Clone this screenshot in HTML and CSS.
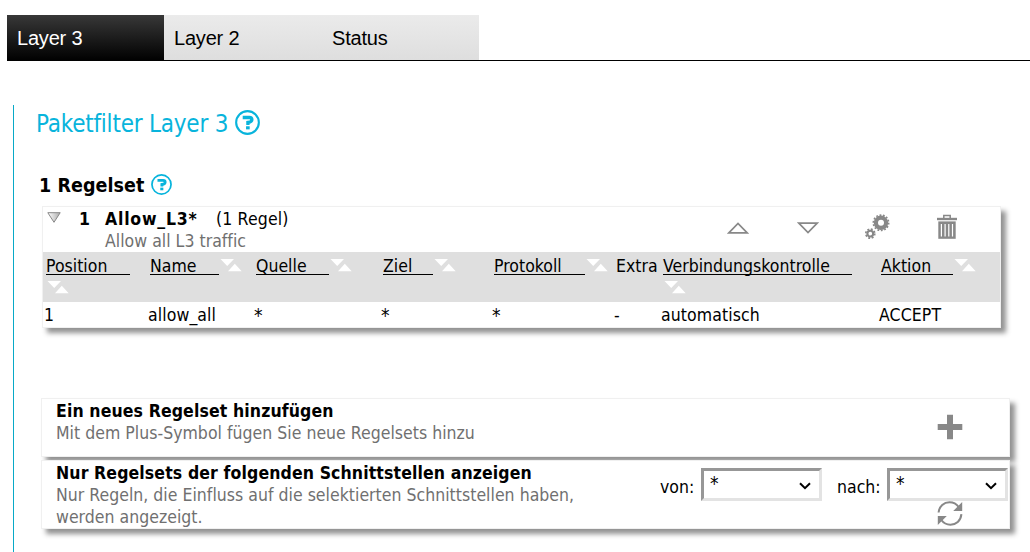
FILE: index.html
```
<!DOCTYPE html>
<html lang="de">
<head>
<meta charset="utf-8">
<title>Paketfilter Layer 3</title>
<link rel="stylesheet" href="styles.css">
</head>
<body>
<svg class="defs" width="0" height="0" aria-hidden="true">
  <symbol id="sort" viewBox="0 0 22 13"><path d="M.5 0H14L7.2 7zM8 12.2h13.7L14.8 4.7z" fill="#fff"/></symbol>
  <symbol id="help" viewBox="0 0 24 24"><circle cx="12" cy="12" r="10.9" fill="none" stroke="#08b4dc" stroke-width="2"/><path d="M7.4 7.2H13.8Q16.2 7.2 16.2 9.3Q16.2 11.3 12.4 12V14.3" fill="none" stroke="#08b4dc" stroke-width="3.2"/><path d="M10.6 15.6h3.5v3h-3.5z" fill="#08b4dc"/></symbol>
</svg>
<nav class="tabs">
  <a class="tab active">Layer 3</a>
  <a class="tab">Layer 2</a>
  <a class="tab">Status</a>
</nav>
<main class="content">
  <h1><span>Paketfilter Layer 3</span><svg class="help-big"><use href="#help"/></svg></h1>
  <h2><span>1 Regelset</span><svg class="help-small"><use href="#help"/></svg></h2>

  <section class="panel ruleset">
    <div class="rule-head">
      <svg class="toggle" width="14" height="11" viewBox="0 0 14 11"><defs><linearGradient id="tg"><stop offset="0" stop-color="#fff"/><stop offset="1" stop-color="#aaa"/></linearGradient></defs><path d="M.8.7h12.4L7 10.3z" fill="url(#tg)" stroke="#888"/></svg>
      <b class="num">1</b>
      <div class="rule-text">
        <div><b class="rule-name">Allow_L3*</b><span class="count">(1 Regel)</span></div>
        <div class="muted traffic">Allow all L3 traffic</div>
      </div>
      <div class="tools">
        <svg width="22" height="12" viewBox="0 0 22 12"><path d="M1.8 10.8h18.4L11 1.4z" fill="none" stroke="#888" stroke-width="1.7"/></svg>
        <svg width="22" height="12" viewBox="0 0 22 12"><path d="M1.8 1.2h18.4L11 10.6z" fill="none" stroke="#888" stroke-width="1.7"/></svg>
        <svg width="26" height="26" viewBox="0 0 26 26" fill="none" stroke="#888"><circle cx="16" cy="8.8" r="5.1" stroke-width="4.2"/><circle cx="16" cy="8.8" r="7.7" stroke-width="1.6" stroke-dasharray="1.8 1.656"/><circle cx="5.3" cy="19.6" r="2.9" stroke-width="2.1"/><circle cx="5.3" cy="19.6" r="4.5" stroke-width="1.7" stroke-dasharray="1.9 1.634"/></svg>
        <svg width="20" height="26" viewBox="0 0 20 26"><path d="M0 3.8h20v2.4H0z" fill="#888"/><path d="M6.8 4V1.5h6.4V4" fill="none" stroke="#888" stroke-width="1.5"/><path d="M1.3 7.4h17.4v17.4H1.3z" fill="#888"/><path d="M4.4 10v12.4M8.1 10v12.4M11.8 10v12.4M15.5 10v12.4" stroke="#fff" stroke-width="1.2"/></svg>
      </div>
    </div>
    <div class="grid cols">
      <div><u class="w84">Position</u><svg class="sort below"><use href="#sort"/></svg></div>
      <div><u class="w69">Name</u><svg class="sort"><use href="#sort"/></svg></div>
      <div><u class="w73">Quelle</u><svg class="sort"><use href="#sort"/></svg></div>
      <div><u class="w50">Ziel</u><svg class="sort"><use href="#sort"/></svg></div>
      <div><u class="w91">Protokoll</u><svg class="sort"><use href="#sort"/></svg></div>
      <div>Extra</div>
      <div><u class="w189">Verbindungskontrolle</u><svg class="sort below"><use href="#sort"/></svg></div>
      <div><u class="w72">Aktion</u><svg class="sort"><use href="#sort"/></svg></div>
    </div>
    <div class="grid row">
      <div>1</div><div>allow_all</div><div class="any">*</div><div class="any">*</div><div class="any">*</div><div>-</div><div>automatisch</div><div>ACCEPT</div>
    </div>
  </section>

  <section class="panel add">
    <div class="desc"><b>Ein neues Regelset hinzufügen</b><p class="muted">Mit dem Plus-Symbol fügen Sie neue Regelsets hinzu</p></div>
    <svg class="plus" width="26" height="26" viewBox="0 0 26 26"><path d="M13 .7v24.6M.7 13h24.6" stroke="#888" stroke-width="6"/></svg>
  </section>

  <section class="panel filter">
    <div class="desc"><b>Nur Regelsets der folgenden Schnittstellen anzeigen</b><p class="muted">Nur Regeln, die Einfluss auf die selektierten Schnittstellen haben,<br>werden angezeigt.</p></div>
    <div class="controls">
      <div class="selects">
        <label class="from">von:</label>
        <div class="select"><span class="any">*</span><svg width="12" height="8" viewBox="0 0 12 8"><path d="M1 1.2l5 5 5-5" fill="none" stroke="#000" stroke-width="2"/></svg></div>
        <label class="to">nach:</label>
        <div class="select"><span class="any">*</span><svg width="12" height="8" viewBox="0 0 12 8"><path d="M1 1.2l5 5 5-5" fill="none" stroke="#000" stroke-width="2"/></svg></div>
      </div>
      <svg class="refresh" width="26" height="25" viewBox="0 0 26 25"><path d="M1.6 11.5C2.2 5 7 1.3 12.5 1.3c4 0 7 1.6 9.2 4.7M24.4 13.2C23.8 20 19 23.7 13.5 23.7c-4 0-7-1.6-9.2-4.7" fill="none" stroke="#888" stroke-width="2"/><path d="M25.2 1v9h-9zM.8 24v-9h9z" fill="#888"/></svg>
    </div>
  </section>
</main>
</body>
</html>
```

FILE: styles.css
```
* { box-sizing: border-box; }
html, body { height: 100%; }
body {
  margin: 0;
  padding-top: 15px;
  overflow: hidden;
  background: #fff;
  color: #000;
  font: 17.5px/22px "DejaVu Sans Condensed", "DejaVu Sans", sans-serif;
  font-stretch: condensed;
  letter-spacing: 0.02px;
  white-space: nowrap;
}
svg { display: block; flex: none; }
.defs { position: absolute; }
p { margin: 0; }
.muted { color: #707070; }

.tabs { display: flex; height: 46px; margin-left: 7px; border-bottom: 1px solid #000; }
.tab {
  width: 157px;
  height: 45px;
  padding-left: 10px;
  font: 20px/46px "Liberation Sans", Arial, sans-serif;
  letter-spacing: -0.2px;
  background: linear-gradient(#ebebeb, #dedede);
}
.tab:last-child { width: 158px; padding-left: 11px; }
.tab.active { height: 46px; background: linear-gradient(#383838, #000); color: #fff; }

.content { height: 447px; margin: 44px 0 0 13px; padding-left: 28px; border-left: 1px solid #08a9c8; }
h1 { display: flex; margin: 0 0 0 -6px; padding-top: 5px; height: 68px; font-weight: 400; font-size: 24px; line-height: 29px; color: #08b4dc; }
h1 span { width: 199px; letter-spacing: -0.22px; }
.help-big { width: 25px; height: 25px; }
h2 { display: flex; margin: 0 0 0 -3px; height: 28px; font-size: 19.5px; line-height: 25px; }
h2 span { width: 112px; letter-spacing: 0.05px; }
.help-small { width: 21px; height: 21px; margin-top: 1px; }

.panel { border: 1px solid #f0f0f0; background: #fff; box-shadow: 5px 5px 5px #929292; }
.ruleset { width: 959px; height: 122px; margin: 5px 0 70px; }
.rule-head { display: flex; height: 45px; padding-top: 1px; }
.toggle { margin: 4px 0 0 4px; }
.num { margin-left: 18px; width: 26px; }
.rule-text { width: 622px; }
.rule-name { display: inline-block; width: 111px; letter-spacing: 0.8px; }
.count { letter-spacing: 0.15px; }
.tools { display: grid; grid-template-columns: 70px 68px 72px 22px; height: 38px; align-items: center; }
.tools svg:nth-child(-n+2) { margin-top: 2px; }
.grid { display: grid; grid-template-columns: 104px 106px 127px 111px 122px 47px 218px 119px; }
.cols { height: 50px; padding: 3px 0 0 3px; background: #dfdfdf; }
.cols > div { display: flex; flex-wrap: wrap; align-content: flex-start; }
.cols u { height: 20px; border-bottom: 1px solid #000; text-decoration: none; }
.sort { width: 22px; height: 13px; margin: 4px 0 0 1px; }
.sort.below { margin: 6px 40px 0 1px; }
.w84 { width: 84px; } .w69 { width: 69px; } .w73 { width: 73px; } .w50 { width: 50px; }
.w91 { width: 91px; } .w189 { width: 189px; } .w72 { width: 72px; }
.row { padding: 2px 0 0 1px; height: 24px; letter-spacing: 0.1px; }
.any { font-size: 19px; }

.add, .filter { display: flex; justify-content: space-between; width: 969px; margin-left: -1px; padding: 1px 0 0 14px; }
.desc b { letter-spacing: 0.12px; }
.add { height: 59px; margin-bottom: 3px; }
.filter { height: 69px; position: relative; }
.plus { margin: 14px 46px 0 0; }
.controls { width: 349px; margin-right: 1px; }
.selects { display: flex; height: 39px; padding-top: 6px; }
.from { width: 42px; padding: 8px 0 0 1px; }
.to { width: 50px; margin-left: 15px; padding-top: 8px; }
.select {
  display: flex;
  justify-content: space-between;
  width: 121px;
  height: 33px;
  padding: 1px 8px 0 6px;
  border: 3px solid;
  border-color: #979797 #e3e3e3 #e3e3e3 #979797;
}
.select svg { margin-top: 10px; }
.refresh { margin-left: 278px; }
```
